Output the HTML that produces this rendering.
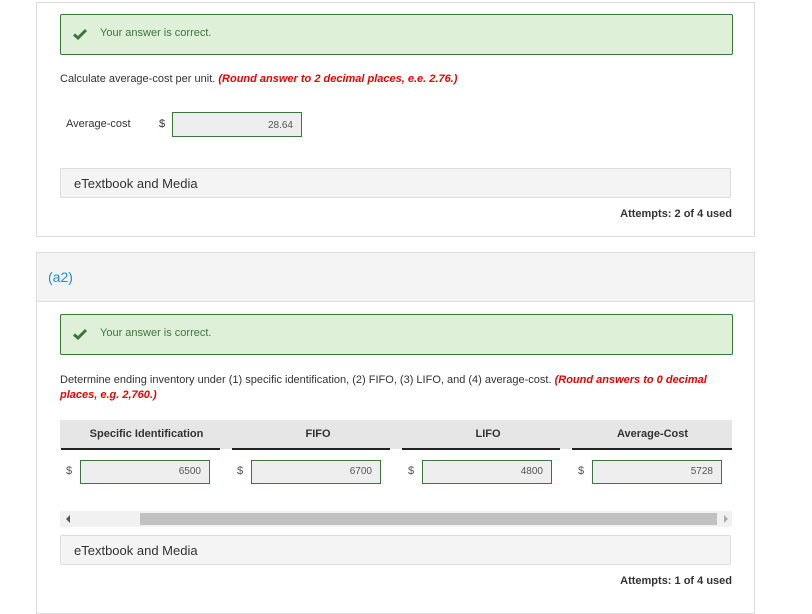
<!DOCTYPE html>
<html><head><style>
body{margin:0;width:812px;height:596px;background:#fff;font-family:"Liberation Sans",sans-serif;color:#333;position:relative;overflow:hidden}
.a{position:absolute}
.card{position:absolute;left:36px;width:717px;border:1px solid #ddd;background:#fff}
.ok{position:absolute;left:60px;width:671px;height:39px;background:#dff0d8;border:1px solid #3c763d;border-radius:2px;font-size:11px;color:#3c763d}
.ok span{position:absolute;left:39px;top:12px}
.ok svg{position:absolute;left:12px;top:13px}
.inp{position:absolute;height:22px;background:#eee;border:1px solid #3c763d;font-size:10px;color:#555;text-align:right;box-sizing:border-box;padding:5px 8px 0 0}
.et{position:absolute;left:60px;width:671px;height:30px;background:#f4f4f4;border:1px solid #ddd;border-radius:2px;font-size:13px;color:#333;box-sizing:border-box;padding:7px 0 0 13px}
.att{position:absolute;right:80px;font-size:11px;font-weight:bold;color:#333}
.red{color:#e00;font-weight:bold;font-style:italic}
.th{position:absolute;top:420px;height:29px;background:#e6e6e6;font-size:11px;font-weight:bold;color:#333;text-align:center;box-sizing:border-box;padding-top:8px}
.ul{position:absolute;top:448px;height:2px;background:#222}
.d{position:absolute;top:465px;font-size:11px;color:#555}
</style></head><body>
<div class="card" style="top:2px;height:233px"></div>
<div class="ok" style="top:14px"><svg width="14" height="12" viewBox="0 0 14 12"><path d="M1 6.5 L5 10 L13 2" stroke="#3c763d" stroke-width="3" fill="none"/></svg><span>Your answer is correct.</span></div>
<div class="a" style="left:60px;top:73px;font-size:11px">Calculate average-cost per unit. <span class="red">(Round answer to 2 decimal places, e.e. 2.76.)</span></div>
<div class="a" style="left:66px;top:118px;font-size:11px">Average-cost</div>
<div class="a" style="left:159px;top:118px;font-size:11px">$</div>
<div class="inp" style="left:172px;top:112px;width:130px;height:25px;padding-top:7px">28.64</div>
<div class="et" style="top:168px">eTextbook and Media</div>
<div class="att" style="top:208px">Attempts: 2 of 4 used</div>

<div class="card" style="top:252px;height:360px"></div>
<div class="a" style="left:37px;top:253px;width:717px;height:48px;background:#f4f4f4;border-bottom:1px solid #ddd"></div>
<div class="a" style="left:48px;top:269px;font-size:14px;color:#1a8fd6">(a2)</div>
<div class="ok" style="top:314px"><svg width="14" height="12" viewBox="0 0 14 12"><path d="M1 6.5 L5 10 L13 2" stroke="#3c763d" stroke-width="3" fill="none"/></svg><span>Your answer is correct.</span></div>
<div class="a" style="left:60px;top:373px;font-size:11px;line-height:15px;width:680px">Determine ending inventory under (1) specific identification, (2) FIFO, (3) LIFO, and (4) average-cost. <span class="red">(Round answers to 0 decimal places, e.g. 2,760.)</span></div>
<div class="th" style="left:60px;width:173px">Specific Identification</div>
<div class="th" style="left:233px;width:170px">FIFO</div>
<div class="th" style="left:403px;width:170px">LIFO</div>
<div class="th" style="left:573px;width:159px">Average-Cost</div>
<div class="ul" style="left:61px;width:159px"></div>
<div class="ul" style="left:232px;width:158px"></div>
<div class="ul" style="left:402px;width:158px"></div>
<div class="ul" style="left:572px;width:160px"></div>
<div class="d" style="left:66px">$</div><div class="inp" style="left:80px;top:460px;width:130px;height:24px">6500</div>
<div class="d" style="left:237px">$</div><div class="inp" style="left:251px;top:460px;width:130px;height:24px">6700</div>
<div class="d" style="left:408px">$</div><div class="inp" style="left:422px;top:460px;width:130px;height:24px">4800</div>
<div class="d" style="left:578px">$</div><div class="inp" style="left:592px;top:460px;width:130px;height:24px">5728</div>
<div class="a" style="left:60px;top:511px;width:672px;height:16px;background:#f1f1f1"></div>
<div class="a" style="left:140px;top:513px;width:577px;height:12px;background:#c1c1c1"></div>
<div class="a" style="left:66px;top:515px;width:0;height:0;border-top:4px solid transparent;border-bottom:4px solid transparent;border-right:4px solid #555"></div>
<div class="a" style="left:724px;top:515px;width:0;height:0;border-top:4px solid transparent;border-bottom:4px solid transparent;border-left:4px solid #aaa"></div>
<div class="et" style="top:535px">eTextbook and Media</div>
<div class="att" style="top:575px">Attempts: 1 of 4 used</div>
</body></html>
